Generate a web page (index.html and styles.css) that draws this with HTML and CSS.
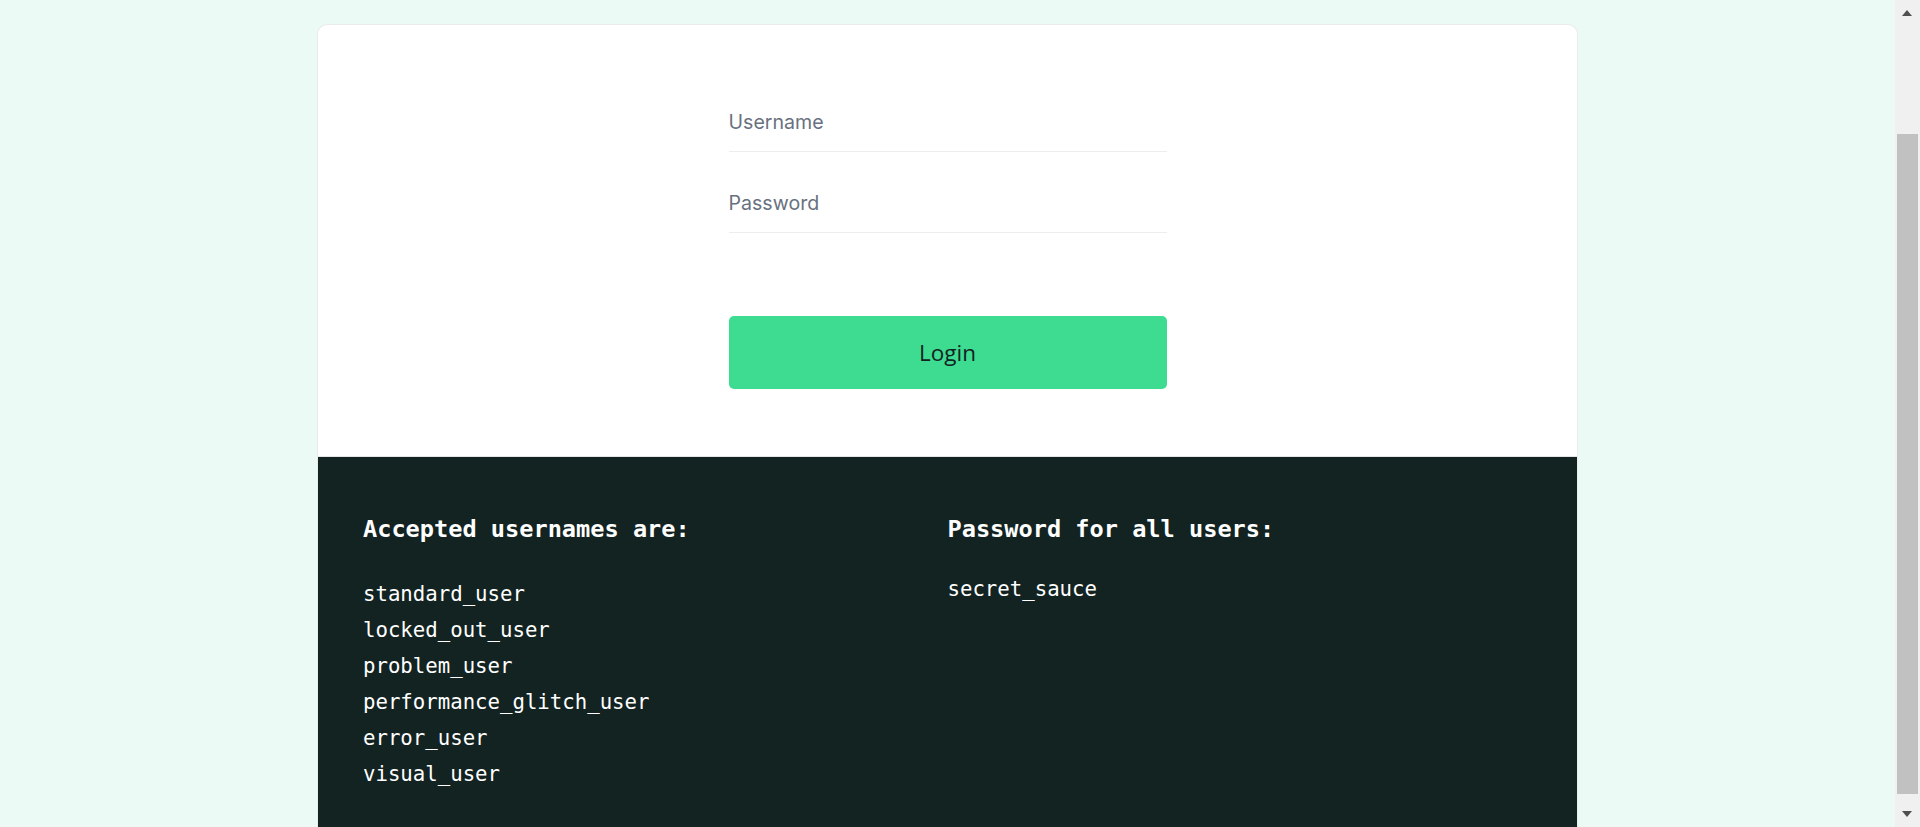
FILE: index.html
```html
<!DOCTYPE html>
<html lang="en">
<head>
<meta charset="utf-8">
<title>Swag Labs</title>
<link rel="stylesheet" href="styles.css">
</head>
<body>
<div class="page">
  <div class="card">
    <div class="login-box">
      <form class="login-form">
        <input class="field" type="text" placeholder="Username">
        <input class="field" type="password" placeholder="Password">
        <button class="login-btn" type="button">Login</button>
      </form>
    </div>
    <div class="credentials">
      <div class="cred-col">
        <h4 class="cred-title">Accepted usernames are:</h4>
        <ul class="cred-list">
          <li>standard_user</li>
          <li>locked_out_user</li>
          <li>problem_user</li>
          <li>performance_glitch_user</li>
          <li>error_user</li>
          <li>visual_user</li>
        </ul>
      </div>
      <div class="cred-col">
        <h4 class="cred-title">Password for all users:</h4>
        <p class="cred-pass">secret_sauce</p>
      </div>
    </div>
  </div>
</div>
<div class="scrollbar">
  <span class="arrow arrow-up"></span>
  <span class="thumb"></span>
  <span class="arrow arrow-down"></span>
</div>
</body>
</html>
```
FILE: styles.css
```css
html, body {
  margin: 0;
  padding: 0;
  height: 827px;
  overflow: hidden;
}
body {
  background: #ebfaf4;
  font-family: Inter, "DejaVu Sans", sans-serif;
}
.page {
  display: flex;
  justify-content: center;
  padding-right: 25px;
  padding-top: 24px;
}
.card {
  width: 1261px;
  box-sizing: border-box;
  background: #fff;
  border: 1px solid #e9ecea;
  border-bottom: none;
  border-radius: 10px 10px 0 0;
  overflow: hidden;
  height: 820px;
  display: flex;
  flex-direction: column;
}
.login-box {
  height: 432px;
  box-sizing: border-box;
  border-bottom: 1px solid #e6e6e6;
  display: flex;
  justify-content: center;
  padding-top: 67px;
}
.login-form {
  width: 438px;
  display: flex;
  flex-direction: column;
}
.field {
  height: 60px;
  box-sizing: border-box;
  border: none;
  border-bottom: 1px solid #ededed;
  padding: 0;
  font-family: Inter, "DejaVu Sans", sans-serif;
  font-size: 19.6px;
  color: #132322;
  outline: none;
  background: transparent;
}
.field + .field {
  margin-top: 21px;
}
.field::placeholder {
  color: #697180;
}
.login-btn {
  margin-top: 83px;
  height: 73px;
  border: none;
  border-radius: 5px;
  background: #3ddc91;
  color: #132322;
  font-family: "Open Sans", sans-serif;
  font-size: 22.5px;
  cursor: pointer;
}
.credentials {
  flex: 1;
  background: #132322;
  display: grid;
  grid-template-columns: 1fr 1fr;
  padding: 57px 45px 0 45px;
  color: #fff;
  font-family: "DejaVu Sans Mono", "Liberation Mono", monospace;
}
.cred-title {
  margin: 0;
  font-size: 23.6px;
  line-height: 30px;
  font-weight: 700;
}
.cred-list {
  list-style: none;
  margin: 31.5px 0 0 0;
  padding: 0;
  font-size: 20.7px;
  line-height: 36px;
}
.cred-pass {
  margin: 27px 0 0 0;
  font-size: 20.7px;
  line-height: 36px;
}
.scrollbar {
  position: fixed;
  top: 0;
  right: 0;
  width: 25px;
  height: 827px;
  background: #f0f0f0;
}
.thumb {
  position: absolute;
  left: 2px;
  top: 134px;
  width: 21px;
  height: 660px;
  background: #c1c1c1;
}
.arrow {
  position: absolute;
  left: 7px;
  width: 0;
  height: 0;
  border-left: 5.5px solid transparent;
  border-right: 5.5px solid transparent;
}
.arrow-up {
  top: 10px;
  border-bottom: 6px solid #505050;
}
.arrow-down {
  top: 811px;
  border-top: 6px solid #505050;
}
```
